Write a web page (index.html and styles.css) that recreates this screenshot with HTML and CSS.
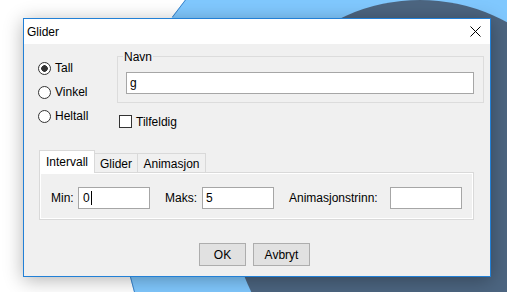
FILE: index.html
```html
<!DOCTYPE html>
<html lang="no">
<head>
    <meta charset="UTF-8">
    <meta name="viewport" content="width=device-width, initial-scale=1.0">
    <title>Glider</title>
    <link rel="stylesheet" href="styles.css">
</head>
<body>
    <!-- desktop wallpaper -->
    <svg class="wallpaper" width="507" height="292" viewBox="0 0 507 292">
        <polygon points="185,0 507,0 507,292 134,292 130,277 150,100 172,17" fill="#80c8fe"/>
        <line x1="185.5" y1="0" x2="172.5" y2="17" stroke="#3f86cc" stroke-width="1"/>
        <line x1="130.5" y1="277" x2="134.5" y2="292" stroke="#3f86cc" stroke-width="1"/>
        <ellipse cx="420" cy="200" rx="190" ry="200" fill="#4c6580"/>
    </svg>

    <div class="dialog">
        <div class="dialog__title">
            <span>Glider</span>
            <svg class="dialog__close" width="11" height="11" viewBox="0 0 11 11">
                <path d="M0.5 0.5 L10.5 10.5 M10.5 0.5 L0.5 10.5" stroke="#000" stroke-width="1" fill="none"/>
            </svg>
        </div>

        <div class="dialog__body">
            <div class="top">
                <div class="choices">
                    <label class="radio">
                        <input type="radio" name="type" checked>
                        <span>Tall</span>
                    </label>
                    <label class="radio">
                        <input type="radio" name="type">
                        <span>Vinkel</span>
                    </label>
                    <label class="radio">
                        <input type="radio" name="type">
                        <span>Heltall</span>
                    </label>
                </div>

                <div class="name">
                    <div class="group">
                        <div class="group__title">Navn</div>
                        <input type="text" class="field field--wide" value="g">
                    </div>
                    <label class="check">
                        <input type="checkbox">
                        <span>Tilfeldig</span>
                    </label>
                </div>
            </div>

            <div class="tabs">
                <div class="tab tab--active tab--first">Intervall</div>
                <div class="tab tab--glider">Glider</div>
                <div class="tab tab--anim">Animasjon</div>
            </div>

            <div class="tab-panel">
                <div class="interval">
                    <span class="interval__label interval__label--min">Min:</span>
                    <div class="field field--caret">0<span class="caret"></span></div>
                </div>
                <div class="interval">
                    <span class="interval__label interval__label--max">Maks:</span>
                    <input type="text" class="field" value="5">
                </div>
                <div class="interval">
                    <span class="interval__label interval__label--step">Animasjonstrinn:</span>
                    <input type="text" class="field" value="">
                </div>
            </div>

            <div class="buttons">
                <button class="button button--ok">OK</button>
                <button class="button button--cancel">Avbryt</button>
            </div>
        </div>
    </div>
</body>
</html>
```

FILE: styles.css
```css
body{
    margin: 0;
    width: 507px;
    height: 292px;
    padding: 18px 0 0 23px;
    box-sizing: border-box;
    overflow: hidden;
    position: relative;
    background: #fff;
    font: 12px "Liberation Sans", Arial, sans-serif;
    color: #000;
}

.wallpaper{
    position: absolute;
    left: 0;
    top: 0;
}

.dialog{
    position: relative;
    width: 468px;
    height: 259px;
    box-sizing: border-box;
    border: 1px solid #2280d6;
    background: #f0f0f0;
    box-shadow: 0 3px 18px rgba(0, 0, 0, 0.3);
    display: flex;
    flex-direction: column;
}

.dialog__title{
    height: 25px;
    background: #fff;
    display: flex;
    align-items: center;
    justify-content: space-between;
    padding: 0 9px 0 3px;
}

.dialog__close{
    display: block;
}

/* top part: type + name */
.top{
    display: flex;
    padding: 12px 6px 0 14px;
}

.choices{
    width: 79px;
    display: flex;
    flex-direction: column;
}

.radio{
    height: 24px;
    display: flex;
    align-items: center;
    gap: 4px;
}

.radio input{
    appearance: none;
    margin: 0;
    width: 13px;
    height: 13px;
    box-sizing: border-box;
    border: 1px solid #333;
    border-radius: 50%;
    background: #fff;
}

.radio input:checked{
    background: radial-gradient(circle, #333 0 3px, #fff 3.6px);
}

.name{
    flex: 1;
    display: flex;
    flex-direction: column;
}

.group{
    border: 1px solid #dcdcdc;
    padding: 0 9px 8px 8px;
}

.group__title{
    width: max-content;
    margin: -7px 0 0 -3px;
    padding: 0 1px;
    line-height: 14px;
    background: #f0f0f0;
}

.field{
    box-sizing: border-box;
    width: 72px;
    height: 22px;
    margin: 0;
    padding: 0 3px;
    border: 1px solid #a6a6a6;
    background: #fff;
    font: inherit;
    color: #000;
    outline: none;
}

.field--wide{
    display: block;
    width: 100%;
    margin-top: 8px;
}

.field--caret{
    display: flex;
    align-items: center;
    padding-left: 4px;
}

.caret{
    width: 1px;
    height: 14px;
    background: #000;
    margin-left: 1px;
}

.check{
    height: 25px;
    margin-top: 6px;
    padding-left: 2px;
    display: flex;
    align-items: center;
    gap: 4px;
}

.check input{
    appearance: none;
    margin: 0;
    width: 13px;
    height: 13px;
    box-sizing: border-box;
    border: 1px solid #333;
    background: #fff;
}

/* tabs */
.tabs{
    display: flex;
    align-items: flex-end;
    margin: 16px 0 0 15px;
}

.tab{
    box-sizing: border-box;
    height: 19px;
    padding-top: 3px;
    line-height: 14px;
    text-align: center;
    border-top: 1px solid #d9d9d9;
    border-right: 1px solid #d9d9d9;
    background: #f0f0f0;
}

.tab--active{
    height: 23px;
    padding-top: 4px;
    margin-bottom: -1px;
    border-left: 1px solid #d9d9d9;
    background: #fff;
    position: relative;
    z-index: 1;
}

.tab--first{
    width: 56px;
}
.tab--glider{
    width: 43px;
}
.tab--anim{
    width: 68px;
}

.tab-panel{
    height: 48px;
    box-sizing: border-box;
    margin: 0 16px 0 15px;
    padding: 14px 0 0 11px;
    border: 1px solid #d9d9d9;
    box-shadow: inset 0 0 0 1px #fff;
    display: flex;
    align-items: flex-start;
    gap: 15px;
}

.interval{
    display: flex;
    align-items: center;
}

.interval__label--min{
    width: 27px;
}
.interval__label--max{
    width: 37px;
}
.interval__label--step{
    width: 101px;
}

/* buttons */
.buttons{
    display: flex;
    justify-content: center;
    gap: 7px;
    margin-top: 23px;
    padding-right: 5px;
}

.button{
    height: 23px;
    padding: 0;
    border: 1px solid #adadad;
    background: #e1e1e1;
    font: inherit;
    color: #000;
}

.button--ok{
    width: 47px;
}
.button--cancel{
    width: 57px;
}
```
